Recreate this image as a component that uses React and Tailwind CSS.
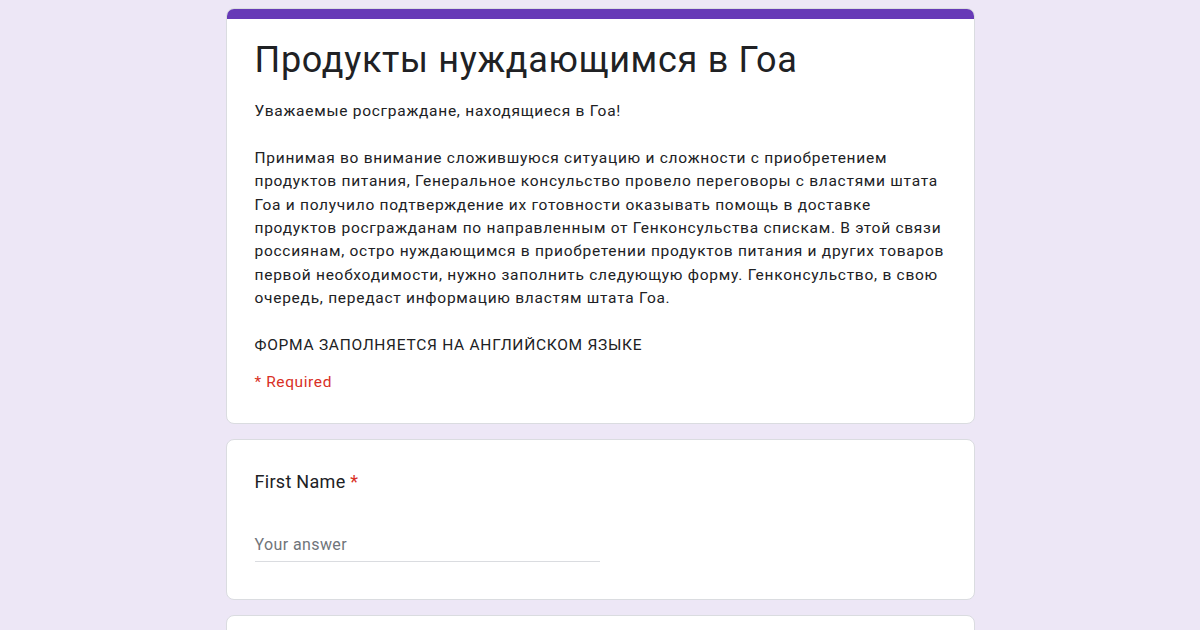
export default function App() {
  const font = { fontFamily: 'Roboto, "Liberation Sans", sans-serif' };
  const lines = [
    'Принимая во внимание сложившуюся ситуацию и сложности с приобретением',
    'продуктов питания, Генеральное консульство провело переговоры с властями штата',
    'Гоа и получило подтверждение их готовности оказывать помощь в доставке',
    'продуктов роcгражданам по направленным от Генконсульства спискам. В этой связи',
    'россиянам, остро нуждающимся в приобретении продуктов питания и других товаров',
    'первой необходимости, нужно заполнить следующую форму. Генконсульство, в свою',
    'очередь, передаст информацию властям штата Гоа.',
  ];
  return (
    <div className="h-[630px] overflow-hidden bg-[#ede7f6]" style={font}>
      <div className="mx-auto w-[749px] pt-2 flex flex-col gap-[15px]">
        <div className="rounded-lg bg-white border border-[#dadce0] overflow-hidden">
          <div className="h-[11px] bg-[#673ab7] -mx-px -mt-px"></div>
          <div className="px-[28px] pt-[17px] pb-[29px] text-[#202124]">
            <h1 className="text-[36px] leading-[48px] font-normal tracking-[0.7px] whitespace-nowrap">Продукты нуждающимся в Гоа</h1>
            <div className="mt-[16px] text-[15.5px] leading-[23.4px] tracking-[0.73px] text-[#202124] whitespace-nowrap">
              <p>Уважаемые роcграждане, находящиеся в Гоа!</p>
              <p>&nbsp;</p>
              <p>
                {lines.map((l, i) => (
                  <span key={i} className="block">{l}</span>
                ))}
              </p>
              <p>&nbsp;</p>
              <p>ФОРМА ЗАПОЛНЯЕТСЯ НА АНГЛИЙСКОМ ЯЗЫКЕ</p>
            </div>
            <div className="mt-[14px] text-[15.5px] leading-[23px] tracking-[0.6px] text-[#d93025]">* Required</div>
          </div>
        </div>
        <div className="rounded-lg bg-white border border-[#dadce0] px-[28px] pt-[29px] pb-[37px]">
          <div className="text-[18px] leading-[26px] tracking-[0.3px] text-[#202124]">
            First Name <span className="text-[#d93025]">*</span>
          </div>
          <div className="mt-[38px] w-[345px] border-b border-[#dadce0] pb-[4px] text-[16px] leading-[24px] tracking-[0.4px] text-[#70757a]">
            Your answer
          </div>
        </div>
        <div className="rounded-lg bg-white border border-[#dadce0] h-[100px]"></div>
      </div>
    </div>
  );
}
